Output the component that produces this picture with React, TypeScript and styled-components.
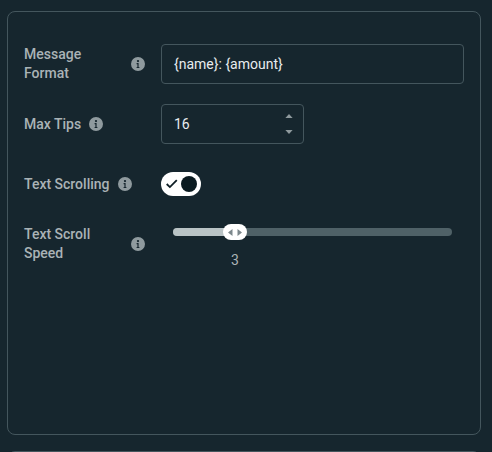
import { createGlobalStyle, styled } from "styled-components";

const GlobalStyle = createGlobalStyle`
  html, body {
    margin: 0;
    height: 100%;
    overflow: hidden;
    background: #16262e;
  }
  * {
    box-sizing: border-box;
  }
`;

function InfoIcon() {
  return (
    <InfoSvg viewBox="0 0 14 14" aria-hidden="true">
      <path
        fillRule="evenodd"
        d="M7 0a7 7 0 1 1 0 14A7 7 0 0 1 7 0Zm0 2.9a1.15 1.15 0 1 0 0 2.3 1.15 1.15 0 0 0 0-2.3ZM5.6 6v1.2h.8v2.7h-.8v1.2h2.8V9.9h-.8V6H5.6Z"
      />
    </InfoSvg>
  );
}

function Label({ children }: { children: string }) {
  return (
    <LabelCell>
      <LabelText>{children}</LabelText>
      <InfoIcon />
    </LabelCell>
  );
}

export default function App() {
  return (
    <Page>
      <GlobalStyle />
      <Card>
        <Form>
          <Label>Message Format</Label>
          <TextField>{"{name}: {amount}"}</TextField>

          <Label>Max Tips</Label>
          <NumberField>
            16
            <Stepper>
              <svg width="8" height="6" viewBox="0 0 8 6">
                <path d="M4 1 7.6 5H.4Z" fill="#8f9a9e" />
              </svg>
              <svg width="8" height="6" viewBox="0 0 8 6">
                <path d="M4 5 7.6 1H.4Z" fill="#8f9a9e" />
              </svg>
            </Stepper>
          </NumberField>

          <Label>Text Scrolling</Label>
          <Toggle>
            <svg width="12" height="10" viewBox="0 0 12 10">
              <path d="M.7 5 3.9 8.1 10.8 1.2" fill="none" stroke="#0d1d24" strokeWidth="1.8" />
            </svg>
            <Knob />
          </Toggle>

          <Label>Text Scroll Speed</Label>
          <SliderCell>
            <Track>
              <TrackFill />
              <Thumb>
                <svg width="14" height="7" viewBox="0 0 14 7">
                  <path d="M4.5 0v7L0 3.5ZM9.5 0v7L14 3.5Z" fill="#7c888c" />
                </svg>
              </Thumb>
            </Track>
            <SliderValue>3</SliderValue>
          </SliderCell>
        </Form>
      </Card>
      <NextCard />
    </Page>
  );
}

const Page = styled.div`
  height: 100vh;
  overflow: hidden;
  padding: 11px 11px 0 7px;
  font-family: Roboto, "Liberation Sans", sans-serif;
`;

const Card = styled.section`
  height: 424px;
  padding: 32px 16px 0;
  border: 1px solid #44565d;
  border-radius: 8px;
`;

const NextCard = styled.div`
  height: 40px;
  margin-top: 16px;
  border: 1px solid #44565d;
  border-radius: 8px;
`;

const Form = styled.div`
  display: grid;
  grid-template-columns: 121px 303px;
  grid-auto-rows: 40px;
  column-gap: 16px;
  row-gap: 20px;
`;

const LabelCell = styled.div`
  display: flex;
  align-items: center;
  gap: 8px;
`;

const LabelText = styled.span`
  font-size: 14px;
  font-weight: 500;
  line-height: 19px;
  color: #aab3b6;
`;

const InfoSvg = styled.svg`
  flex: none;
  width: 14px;
  height: 14px;
  fill: #8f9a9e;
`;

const TextField = styled.div`
  display: flex;
  align-items: center;
  padding: 0 12px;
  border: 1px solid #44565d;
  border-radius: 4px;
  font-size: 14px;
  color: #e8ecee;
`;

const NumberField = styled(TextField)`
  position: relative;
  width: 143px;
`;

const Stepper = styled.div`
  position: absolute;
  top: 8px;
  right: 10px;
  display: flex;
  flex-direction: column;
  gap: 10px;
  svg {
    display: block;
  }
`;

const Toggle = styled.div`
  align-self: center;
  display: flex;
  align-items: center;
  justify-content: space-between;
  width: 40px;
  height: 24px;
  padding: 0 4px 0 5px;
  border-radius: 12px;
  background: #fff;
`;

const Knob = styled.span`
  width: 16px;
  height: 16px;
  border-radius: 50%;
  background: #0a1a20;
`;

const SliderCell = styled.div`
  padding: 4px 12px 0;
`;

const Track = styled.div`
  position: relative;
  height: 8px;
  border-radius: 4px;
  background: #4f6167;
`;

const TrackFill = styled.div`
  width: 62px;
  height: 100%;
  border-radius: 4px 0 0 4px;
  background: #b9c3c5;
`;

const Thumb = styled.div`
  position: absolute;
  top: -4px;
  left: 50px;
  display: flex;
  align-items: center;
  justify-content: center;
  width: 24px;
  height: 16px;
  border-radius: 8px;
  background: #fff;
  svg {
    display: block;
  }
`;

const SliderValue = styled.div`
  width: 124px;
  margin-top: 14px;
  text-align: center;
  font-size: 14px;
  line-height: 20px;
  color: #aab3b6;
`;
